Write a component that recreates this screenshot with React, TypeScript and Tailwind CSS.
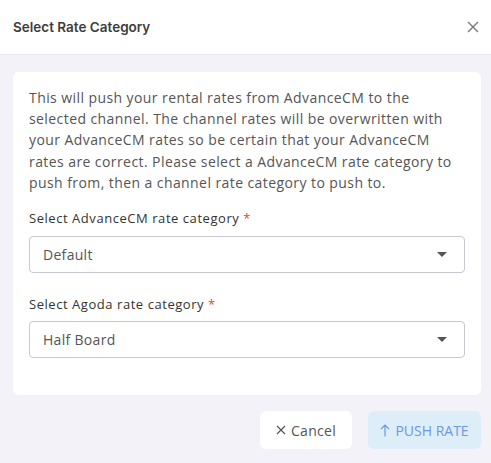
import React from "react";

function Caret() {
  return (
    <svg width="10" height="5" viewBox="0 0 10 5" className="shrink-0">
      <path d="M0 0 L10 0 L5 5 Z" fill="#555" />
    </svg>
  );
}

function Select({ value }: { value: string }) {
  return (
    <div className="flex h-[37px] items-center justify-between rounded-[4px] border border-[#c8c8d0] bg-white pl-[13px] pr-[17px]">
      <span className="text-[14px] tracking-[0.3px] text-[#555]">{value}</span>
      <Caret />
    </div>
  );
}

export default function App() {
  return (
    <div className="flex h-[463px] w-[491px] flex-col bg-[#f2f2f8] font-['Open_Sans',sans-serif]">
      <div className="flex h-[55px] items-center justify-between border-b border-[#e6e6ec] bg-white pl-[13px] pr-[12px]">
        <span className="font-['Inter',sans-serif] text-[13.5px] font-semibold text-[#3d3d3d]">
          Select Rate Category
        </span>
        <svg width="12" height="12" viewBox="0 0 12 12">
          <path d="M1 1 L11 11 M11 1 L1 11" stroke="#777" strokeWidth="1.4" />
        </svg>
      </div>
      <div className="pl-[13px] pr-[10px] pt-[17px]">
        <div className="flex flex-col rounded-[6px] bg-white px-[16px] pb-[37px] pt-[15px]">
          <p className="text-[14px] leading-[21.2px] tracking-[0.42px] text-[#555]">
            This will push your rental rates from AdvanceCM to the
            <br />
            selected channel. The channel rates will be overwritten with
            <br />
            your AdvanceCM rates so be certain that your AdvanceCM
            <br />
            rates are correct. Please select a AdvanceCM rate category to
            <br />
            push from, then a channel rate category to push to.
          </p>
          <div className="mt-[15px] text-[13px] leading-[20px] tracking-[0.55px] text-[#333]">
            Select AdvanceCM rate category <span className="text-[#e8462a]">*</span>
          </div>
          <div className="mt-[8px]">
            <Select value="Default" />
          </div>
          <div className="mt-[21px] text-[13px] leading-[20px] tracking-[0.55px] text-[#333]">
            Select Agoda rate category <span className="text-[#e8462a]">*</span>
          </div>
          <div className="mt-[7px]">
            <Select value="Half Board" />
          </div>
        </div>
      </div>
      <div className="flex justify-end gap-[16px] px-[10px] pt-[16px]">
        <button className="flex h-[38px] w-[92px] items-center justify-center gap-[5px] rounded-[6px] bg-white text-[14px] tracking-[0.3px] text-[#555]">
          <svg width="10" height="10" viewBox="0 0 10 10">
            <path d="M1 1 L9 9 M9 1 L1 9" stroke="#555" strokeWidth="1.2" />
          </svg>
          Cancel
        </button>
        <button className="flex h-[38px] w-[113px] items-center justify-center gap-[5px] rounded-[6px] bg-[#deeef9] text-[14px] text-[#6e97e6]">
          <svg width="10" height="13" viewBox="0 0 10 13">
            <path d="M5 12.5 L5 1 M1 5 L5 1 L9 5" stroke="#6e97e6" strokeWidth="1.2" fill="none" />
          </svg>
          PUSH RATE
        </button>
      </div>
    </div>
  );
}
